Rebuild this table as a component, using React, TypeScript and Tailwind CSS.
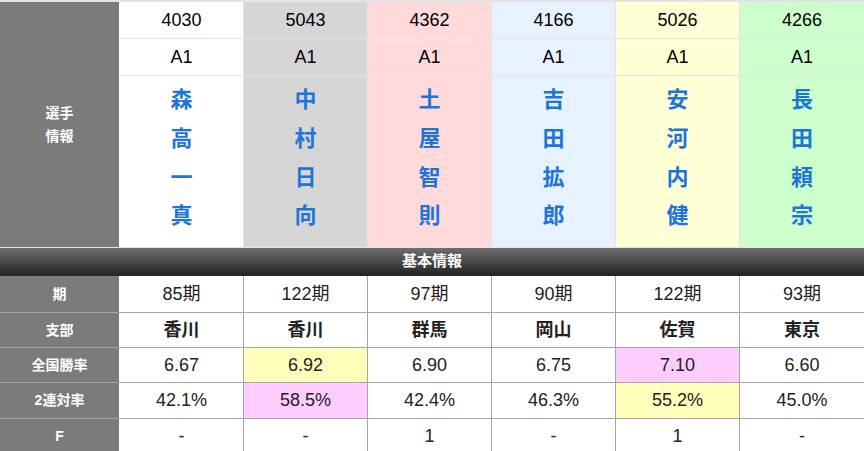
import React from "react";

interface Racer {
  no: string;
  cls: string;
  name: string;
  bg: string;
  ki: string;
  shibu: string;
  rate: string;
  rateBg?: string;
  ren: string;
  renBg?: string;
  f: string;
}

const racers: Racer[] = [
  { no: "4030", cls: "A1", name: "森高一真", bg: "bg-white", ki: "85期", shibu: "香川", rate: "6.67", ren: "42.1%", f: "-" },
  { no: "5043", cls: "A1", name: "中村日向", bg: "bg-[#d6d6d6]", ki: "122期", shibu: "香川", rate: "6.92", rateBg: "bg-[#ffffbb]", ren: "58.5%", renBg: "bg-[#ffccff]", f: "-" },
  { no: "4362", cls: "A1", name: "土屋智則", bg: "bg-[#ffdada]", ki: "97期", shibu: "群馬", rate: "6.90", ren: "42.4%", f: "1" },
  { no: "4166", cls: "A1", name: "吉田拡郎", bg: "bg-[#e6f2ff]", ki: "90期", shibu: "岡山", rate: "6.75", ren: "46.3%", f: "-" },
  { no: "5026", cls: "A1", name: "安河内健", bg: "bg-[#ffffd6]", ki: "122期", shibu: "佐賀", rate: "7.10", rateBg: "bg-[#ffccff]", ren: "55.2%", renBg: "bg-[#ffffbb]", f: "1" },
  { no: "4266", cls: "A1", name: "長田頼宗", bg: "bg-[#ccffcc]", ki: "93期", shibu: "東京", rate: "6.60", ren: "45.0%", f: "-" },
];

type Row = {
  label: string;
  h: string;
  bold?: boolean;
  value: (r: Racer) => string;
  bg?: (r: Racer) => string | undefined;
};

const rows: Row[] = [
  { label: "期", h: "h-[36px]", value: (r) => r.ki },
  { label: "支部", h: "h-[35px]", bold: true, value: (r) => r.shibu },
  { label: "全国勝率", h: "h-[35px]", value: (r) => r.rate, bg: (r) => r.rateBg },
  { label: "2連対率", h: "h-[36px]", value: (r) => r.ren, bg: (r) => r.renBg },
  { label: "F", h: "h-[35px]", value: (r) => r.f },
];

export default function App() {
  return (
    <div
      className="w-[864px] h-[451px] overflow-hidden bg-white text-[#222]"
      style={{ fontFamily: '"Liberation Sans", "Noto Sans CJK JP", sans-serif' }}
    >
      {/* 選手情報 */}
      <div className="flex border-t-2 border-[#e3e3e3]">
        <div className="w-[119px] h-[245px] mr-px bg-[#7b7b7b] flex flex-col items-center justify-center text-white font-bold text-[14px] leading-[23px]">
          <span>選手</span>
          <span>情報</span>
        </div>
        {racers.map((r, i) => (
          <div
            key={r.no}
            className={`w-[124px] flex flex-col ${r.bg} ${i < 5 ? "border-r border-[#e3e3e3]" : ""}`}
          >
            <div className="h-[37px] pt-px border-b border-[#e3e3e3] flex items-center justify-center text-[18px] text-black">
              {r.no}
            </div>
            <div className="h-[37px] pt-px border-b border-[#e3e3e3] flex items-center justify-center text-[18px] text-black">
              {r.cls}
            </div>
            <div className="h-[170px] flex flex-col items-center pt-[5px] text-[22px] leading-[38.8px] font-bold text-[#1f74d8]">
              {r.name.split("").map((c, j) => (
                <span key={j}>{c}</span>
              ))}
            </div>
          </div>
        ))}
      </div>

      {/* 基本情報 */}
      <div className="h-[29px] pb-[2px] border-t border-[#e3e3e3] bg-gradient-to-b from-[#6f6f6f] to-[#232323] flex items-center justify-center text-white font-bold text-[15px]">
        基本情報
      </div>

      {rows.map((row, ri) => (
        <div
          key={row.label}
          className={`flex ${row.h} ${ri > 0 ? "border-t border-[#a6a6a6]" : ""}`}
        >
          <div className="w-[119px] mr-px bg-[#7b7b7b] flex items-center justify-center text-white font-bold text-[14px]">
            {row.label}
          </div>
          {racers.map((r, i) => (
            <div
              key={r.no}
              className={`w-[124px] flex items-center justify-center text-[18px] ${row.bold ? "font-bold text-[17px]" : ""} ${
                (row.bg && row.bg(r)) || "bg-white"
              } ${i < 5 ? "border-r border-[#a6a6a6]" : ""}`}
            >
              {row.value(r)}
            </div>
          ))}
        </div>
      ))}
    </div>
  );
}
